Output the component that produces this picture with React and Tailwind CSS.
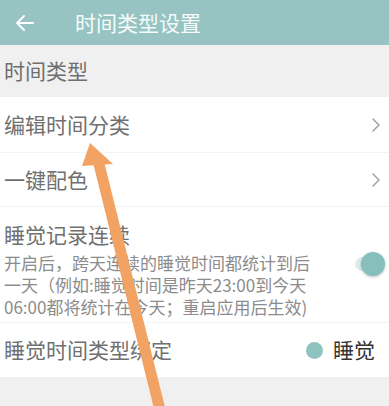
import React from 'react';

const font = { fontFamily: '"Noto Sans CJK SC", "Noto Sans", sans-serif' };

const Chevron = () => (
  <svg width="10" height="16" viewBox="0 0 10 16" className="text-[#9a9a9a]">
    <path d="M2 2l6 6-6 6" fill="none" stroke="currentColor" strokeWidth="1.4" strokeLinecap="round" strokeLinejoin="round" />
  </svg>
);

export default function App() {
  return (
    <div className="relative w-[389px] h-[406px] overflow-hidden bg-[#f0f0f0]" style={font}>
      {/* header */}
      <div className="h-[45px] bg-[#97c4c2] flex items-center">
        <svg width="20" height="18" viewBox="0 0 20 18" className="ml-[15px] text-white">
          <path d="M18 9H3M9 2L2 9l7 7" fill="none" stroke="currentColor" strokeWidth="2" strokeLinecap="round" strokeLinejoin="round" />
        </svg>
        <span className="ml-[40px] text-[21px] text-[#f4fbfa] leading-none">时间类型设置</span>
      </div>

      {/* section label */}
      <div className="h-[52px] flex items-center pl-[4px] text-[21px] text-[#6f6f6f]">时间类型</div>

      <div className="bg-white">
        <div className="h-[56px] flex items-center justify-between pl-[4px] pr-[8px] border-b border-[#f3f3f3]">
          <span className="text-[21px] text-[#707070]">编辑时间分类</span>
          <Chevron />
        </div>
        <div className="h-[54px] flex items-center justify-between pl-[4px] pr-[8px] border-b border-[#f3f3f3]">
          <span className="text-[21px] text-[#707070]">一键配色</span>
          <Chevron />
        </div>
        <div className="h-[116px] flex items-start justify-between pl-[4px] pr-[8px] border-b border-[#f3f3f3]">
          <div className="pt-[14px]">
            <div className="text-[21px] leading-[26px] text-[#707070]">睡觉记录连续</div>
            <div className="mt-[5px] text-[17px] leading-[22px] text-[#8c8c8c]">
              <div>开启后，跨天连续的睡觉时间都统计到后</div>
              <div>一天（例如:睡觉时间是昨天23:00到今天</div>
              <div>06:00都将统计在今天；重启应用后生效)</div>
            </div>
          </div>
          <div className="relative mt-[45px] mr-[-4px] w-[36px] h-[24px] flex items-center">
            <div className="ml-[6px] w-[26px] h-[14px] rounded-full bg-[#dcedeb]" />
            <div className="absolute right-[0px] top-0 w-[24px] h-[24px] rounded-full bg-[#86bfbb] shadow-[0_1px_3px_rgba(0,0,0,0.25)]" />
          </div>
        </div>
        <div className="h-[54px] flex items-center justify-between pl-[4px] pr-[14px]">
          <span className="text-[21px] text-[#707070]">睡觉时间类型绑定</span>
          <div className="flex items-center gap-[10px]">
            <span className="w-[17px] h-[17px] rounded-full bg-[#8fc3bf]" />
            <span className="text-[21px] text-[#333333]">睡觉</span>
          </div>
        </div>
      </div>

      {/* annotation arrow */}
      <svg className="absolute inset-0 pointer-events-none" width="389" height="406" viewBox="0 0 389 406">
        <line x1="98" y1="160" x2="160" y2="410" stroke="#f2a262" strokeWidth="11" />
        <polygon points="90,143 82,166 113,164" fill="#f2a262" />
      </svg>
    </div>
  );
}
